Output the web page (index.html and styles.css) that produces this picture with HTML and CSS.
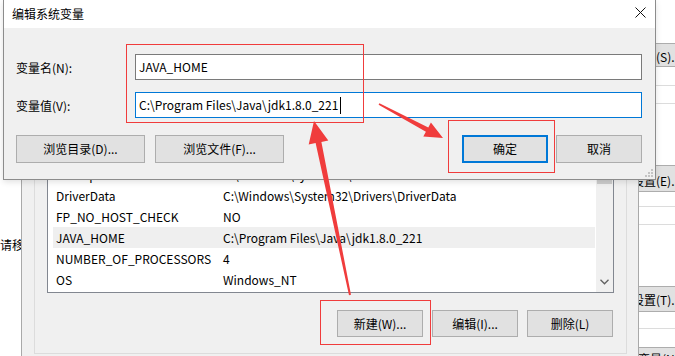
FILE: index.html
```html
<!DOCTYPE html>
<html lang="zh-CN">
<head>
    <meta charset="UTF-8">
    <title>编辑系统变量</title>
    <link rel="stylesheet" href="styles.css">
</head>
<body>
<div class="desk">
    <!-- parent window (system properties), mostly hidden -->
    <div class="sysprop">
        <div class="sp-left"><span>请移动</span></div>
        <div class="sp-right">
            <div class="sp-btn btn-s">设置(S)...</div>
            <div class="sp-line line-a"></div>
            <div class="sp-line line-b"></div>
            <div class="sp-btn btn-e">设置(E)...</div>
            <div class="sp-line line-c"></div>
            <div class="sp-line line-b"></div>
            <div class="sp-btn btn-t">设置(T)...</div>
            <div class="sp-line line-d"></div>
            <div class="sp-btn btn-n">环境变量(N)...</div>
        </div>
    </div>

    <!-- environment variables window -->
    <div class="envwin">
        <div class="group">
            <div class="listbox">
                <div class="rows">
                    <div class="row"><span class="c1">ComSpec</span><span class="c2">C:\Windows\system32\cmd.exe</span></div>
                    <div class="row"><span class="c1">DriverData</span><span class="c2">C:\Windows\System32\Drivers\DriverData</span></div>
                    <div class="row"><span class="c1">FP_NO_HOST_CHECK</span><span class="c2">NO</span></div>
                    <div class="row selected"><span class="c1">JAVA_HOME</span><span class="c2">C:\Program Files\Java\jdk1.8.0_221</span></div>
                    <div class="row"><span class="c1">NUMBER_OF_PROCESSORS</span><span class="c2">4</span></div>
                    <div class="row"><span class="c1">OS</span><span class="c2">Windows_NT</span></div>
                </div>
                <div class="vscroll">
                    <div class="sb-arrow"></div>
                    <div class="sb-thumb"></div>
                    <div class="sb-track"></div>
                    <div class="sb-arrow">
                        <svg width="9" height="6" viewBox="0 0 9 6"><path d="M0.5 0.8 L4.5 4.8 L8.5 0.8" fill="none" stroke="#606060" stroke-width="1.3"/></svg>
                    </div>
                </div>
            </div>
            <div class="group-btns">
                <div class="btn">新建(W)...</div>
                <div class="btn">编辑(I)...</div>
                <div class="btn">删除(L)</div>
            </div>
        </div>
    </div>

    <!-- edit dialog -->
    <div class="dialog">
        <div class="titlebar">
            <span class="title">编辑系统变量</span>
            <svg class="close" width="11" height="11" viewBox="0 0 11 11"><path d="M0.5 0.5 L10.5 10.5 M10.5 0.5 L0.5 10.5" stroke="#111" stroke-width="1"/></svg>
        </div>
        <div class="dlg-body">
            <div class="field-row">
                <label class="lbl">变量名(N):</label>
                <div class="field">JAVA_HOME</div>
            </div>
            <div class="field-row">
                <label class="lbl">变量值(V):</label>
                <div class="field focused">C:\Program Files\Java\jdk1.8.0_221<span class="caret"></span></div>
            </div>
            <div class="dlg-btns">
                <div class="btn wide">浏览目录(D)...</div>
                <div class="btn wide">浏览文件(F)...</div>
                <div class="spacer"></div>
                <div class="btn default">确定</div>
                <div class="btn">取消</div>
            </div>
        </div>
        <svg class="grip" width="10" height="10" viewBox="0 0 10 10" fill="#c4c4c4">
            <rect x="7" y="1" width="2" height="2"/>
            <rect x="4" y="4" width="2" height="2"/><rect x="7" y="4" width="2" height="2"/>
            <rect x="1" y="7" width="2" height="2"/><rect x="4" y="7" width="2" height="2"/><rect x="7" y="7" width="2" height="2"/>
        </svg>
    </div>

    <!-- annotation marks -->
    <svg class="marks" width="675" height="356" viewBox="0 0 675 356">
        <g fill="none" stroke="#f03c3c" stroke-width="1">
            <rect x="126.5" y="44.5" width="237" height="78"/>
            <rect x="448.5" y="120.5" width="106" height="52"/>
            <rect x="320.5" y="300.5" width="110" height="44"/>
        </g>
        <g fill="#f03c3c">
            <polygon points="314,121 328.3,140.5 321.4,141.9 351,294.8 349,295.2 315.6,143.1 308.7,144.5"/>
            <polygon points="443,138 423.3,136.6 425.9,131.8 378.6,104.7 379.4,103.3 428.3,127.4 430.9,122.6"/>
        </g>
    </svg>
</div>
</body>
</html>
```

FILE: styles.css
```css
* {
    box-sizing: border-box;
}
body {
    margin: 0;
    font-family: "Noto Sans CJK SC", sans-serif;
    font-size: 12px;
    color: #000;
    background: #fff;
}
.desk {
    position: relative;
    width: 675px;
    height: 356px;
    overflow: hidden;
}

/* parent window */
.sysprop {
    position: absolute;
    top: 0;
    left: 0;
    width: 675px;
    height: 356px;
    background: #fff;
    display: flex;
    justify-content: space-between;
}
.sp-left {
    width: 21px;
    overflow: hidden;
    white-space: nowrap;
    padding-top: 237px;
    line-height: 16px;
}
.sp-right {
    width: 55px;
    display: flex;
    flex-direction: column;
    white-space: nowrap;
    overflow: hidden;
}
.sp-btn {
    flex-shrink: 0;
    background: #e1e1e1;
    border: 1px solid #adadad;
    padding-left: 11px;
    margin-right: -40px;
}
.btn-s {
    margin-top: 43px;
    height: 24px;
    line-height: 26px;
}
.btn-e {
    margin-top: 61px;
    height: 27px;
    line-height: 29px;
}
.btn-t {
    margin-top: 61px;
    height: 26px;
    line-height: 26px;
}
.btn-n {
    margin-top: 18px;
    margin-left: -18px;
    height: 26px;
    line-height: 18px;
    padding-top: 2px;
}
.sp-line {
    flex-shrink: 0;
    height: 1px;
    background: #dcdcdc;
}
.line-a { margin-top: 18px; }
.line-b { margin-top: 17px; }
.line-c { margin-top: 14px; }
.line-d { margin-top: 16px; }

/* environment variables window */
.envwin {
    position: absolute;
    top: 0;
    left: 21px;
    width: 618px;
    height: 380px;
    background: #f0f0f0;
    border-left: 1px solid #a9a9a9;
    border-right: 1px solid #a9a9a9;
    padding: 80px 11px 0 12px;
}
.group {
    border: 1px solid #dcdcdc;
    padding: 20px 12px 16px 12px;
}
.listbox {
    height: 192px;
    border: 1px solid #828790;
    background: #fff;
    display: flex;
}
.rows {
    flex: 1;
    display: flex;
    flex-direction: column;
    justify-content: flex-end;
    padding: 0 1px 2px 5px;
    overflow: hidden;
}
.row {
    display: flex;
    height: 21px;
    line-height: 21px;
    white-space: nowrap;
}
.row.selected {
    background: #efefef;
}
.c1 {
    width: 167px;
    padding-left: 3px;
}
.c2 {
    padding-left: 3px;
}
.vscroll {
    width: 17px;
    background: #f0f0f0;
    display: flex;
    flex-direction: column;
}
.sb-arrow {
    height: 17px;
    display: flex;
    align-items: center;
    justify-content: center;
    padding-bottom: 3px;
}
.sb-thumb {
    height: 65px;
    margin: 0 1px;
    background: #cdcdcd;
}
.sb-track {
    flex: 1;
}
.group-btns {
    display: flex;
    justify-content: flex-end;
    gap: 9px;
    margin-top: 17px;
    margin-right: 1px;
}
.btn {
    width: 86px;
    height: 27px;
    background: #e1e1e1;
    border: 1px solid #adadad;
    text-align: center;
    line-height: 25px;
    white-space: nowrap;
}

/* edit dialog */
.dialog {
    position: absolute;
    top: 0;
    left: 3px;
    width: 653px;
    background: #f0f0f0;
    border: 1px solid #8c8c8c;
    border-top: none;
    box-shadow: 0 2px 6px rgba(0, 0, 0, 0.12);
}
.titlebar {
    height: 28px;
    background: #fff;
    display: flex;
    align-items: center;
    justify-content: space-between;
    padding: 0 9px 0 8px;
}
.title {
    line-height: 28px;
}
.close {
    margin-top: -4px;
}
.dlg-body {
    padding: 26px 13px 16px 12px;
    display: flex;
    flex-direction: column;
    gap: 12px;
}
.field-row {
    display: flex;
    align-items: center;
}
.lbl {
    width: 119px;
}
.field {
    flex: 1;
    height: 26px;
    background: #fff;
    border: 1px solid #7a7a7a;
    padding-left: 3px;
    line-height: 24px;
    white-space: nowrap;
}
.field.focused {
    border-color: #0078d7;
}
.caret {
    display: inline-block;
    width: 1px;
    height: 17px;
    margin-left: 2px;
    background: #000;
    vertical-align: -4px;
}
.dlg-btns {
    display: flex;
    margin-top: 5px;
}
.dlg-btns .btn {
    height: 28px;
    line-height: 26px;
}
.dlg-btns .btn + .btn {
    margin-left: 8px;
}
.dlg-btns .btn.wide {
    width: 129px;
}
.dlg-btns .btn.wide + .btn.wide {
    margin-left: 10px;
}
.spacer {
    flex: 1;
}
.btn.default {
    border: 2px solid #0078d7;
    line-height: 24px;
}
.grip {
    position: absolute;
    right: 1px;
    bottom: 1px;
}

/* red annotations */
.marks {
    position: absolute;
    top: 0;
    left: 0;
    pointer-events: none;
}
```
